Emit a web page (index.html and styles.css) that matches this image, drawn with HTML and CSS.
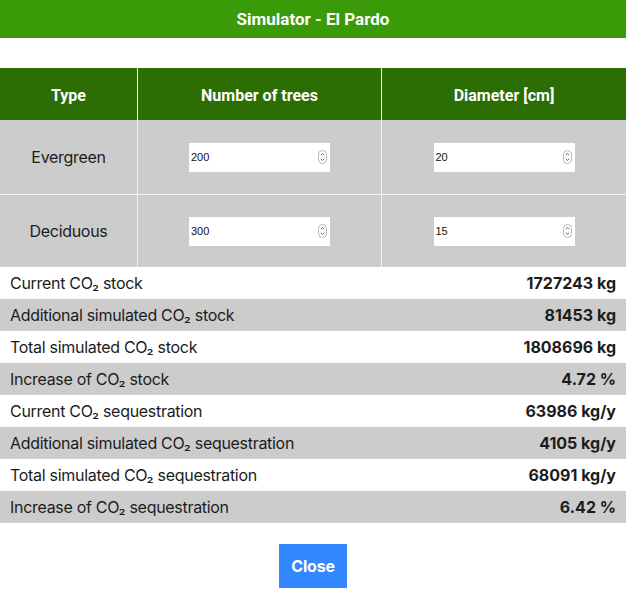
FILE: index.html
```html
<!DOCTYPE html>
<html>
<head>
<meta charset="utf-8">
<link rel="stylesheet" href="styles.css">
</head>
<body>
<div class="title">Simulator - El Pardo</div>
<div class="grid">
  <div class="th">Type</div>
  <div class="th">Number of trees</div>
  <div class="th">Diameter [cm]</div>

  <div class="td r1">Evergreen</div>
  <div class="td r1"><div class="num"><span class="val">200</span><svg class="spin" width="9" height="14" viewBox="0 0 9 14"><rect x="0.5" y="0.5" width="8" height="13" rx="4" fill="#fff" stroke="#b8b8b8"/><path d="M2.8 5.2 L4.5 3.6 L6.2 5.2 M2.8 8.8 L4.5 10.4 L6.2 8.8" fill="none" stroke="#555" stroke-width="0.9"/></svg></div></div>
  <div class="td r1"><div class="num"><span class="val">20</span><svg class="spin" width="9" height="14" viewBox="0 0 9 14"><rect x="0.5" y="0.5" width="8" height="13" rx="4" fill="#fff" stroke="#b8b8b8"/><path d="M2.8 5.2 L4.5 3.6 L6.2 5.2 M2.8 8.8 L4.5 10.4 L6.2 8.8" fill="none" stroke="#555" stroke-width="0.9"/></svg></div></div>

  <div class="td r2">Deciduous</div>
  <div class="td r2"><div class="num"><span class="val">300</span><svg class="spin" width="9" height="14" viewBox="0 0 9 14"><rect x="0.5" y="0.5" width="8" height="13" rx="4" fill="#fff" stroke="#b8b8b8"/><path d="M2.8 5.2 L4.5 3.6 L6.2 5.2 M2.8 8.8 L4.5 10.4 L6.2 8.8" fill="none" stroke="#555" stroke-width="0.9"/></svg></div></div>
  <div class="td r2"><div class="num"><span class="val">15</span><svg class="spin" width="9" height="14" viewBox="0 0 9 14"><rect x="0.5" y="0.5" width="8" height="13" rx="4" fill="#fff" stroke="#b8b8b8"/><path d="M2.8 5.2 L4.5 3.6 L6.2 5.2 M2.8 8.8 L4.5 10.4 L6.2 8.8" fill="none" stroke="#555" stroke-width="0.9"/></svg></div></div>
</div>
<div class="results">
  <div class="row"><span>Current CO₂ stock</span><b>1727243 kg</b></div>
  <div class="row alt"><span>Additional simulated CO₂ stock</span><b>81453 kg</b></div>
  <div class="row"><span>Total simulated CO₂ stock</span><b>1808696 kg</b></div>
  <div class="row alt"><span>Increase of CO₂ stock</span><b>4.72 %</b></div>
  <div class="row"><span>Current CO₂ sequestration</span><b>63986 kg/y</b></div>
  <div class="row alt"><span>Additional simulated CO₂ sequestration</span><b>4105 kg/y</b></div>
  <div class="row"><span>Total simulated CO₂ sequestration</span><b>68091 kg/y</b></div>
  <div class="row alt"><span>Increase of CO₂ sequestration</span><b>6.42 %</b></div>
</div>
<div class="actions"><button class="close">Close</button></div>
</body>
</html>
```

FILE: styles.css
```css
html, body {
  margin: 0;
  padding: 0;
  background: #fff;
}
body {
  width: 626px;
  font-family: Inter, "Liberation Sans", sans-serif;
  color: #1c1c1c;
}
.title {
  height: 38px;
  background: #3a9a07;
  color: #fff;
  font-family: Roboto, sans-serif;
  font-weight: 700;
  font-size: 17px;
  display: flex;
  align-items: center;
  justify-content: center;
  margin-bottom: 30px;
}
.grid {
  display: grid;
  grid-template-columns: 137px 243px 244px;
  grid-template-rows: 52px 74px 73px;
  column-gap: 1px;
  background: #f2f2f2;
}
.th {
  background: #2c6e04;
  color: #fff;
  font-family: Roboto, sans-serif;
  font-weight: 700;
  font-size: 16px;
  padding-top: 2px;
  box-sizing: border-box;
  display: flex;
  align-items: center;
  justify-content: center;
}
.td {
  background: #cccccc;
  display: flex;
  align-items: center;
  justify-content: center;
  font-size: 16px;
  letter-spacing: -0.3px;
}
.r2 {
  border-top: 1px solid #f2f2f2;
}
.num {
  width: 141px;
  height: 29px;
  background: #fff;
  display: flex;
  align-items: center;
  justify-content: space-between;
  padding: 0 3px 0 2px;
  box-sizing: border-box;
  font-family: "Liberation Sans", sans-serif;
  font-size: 11px;
  letter-spacing: 0;
  color: #111;
}
.spin {
  display: block;
}
.results {
  display: flex;
  flex-direction: column;
}
.row {
  height: 32px;
  display: flex;
  align-items: center;
  justify-content: space-between;
  padding: 0 10px;
  font-size: 16px;
  letter-spacing: -0.3px;
}
.row b {
  font-weight: 700;
  letter-spacing: 0;
}
.alt {
  background: #cccccc;
}
.actions {
  display: flex;
  justify-content: center;
  padding-top: 21px;
}
.close {
  width: 68px;
  height: 44px;
  border: none;
  background: #3388ff;
  color: #fff;
  font-family: Inter, "Liberation Sans", sans-serif;
  font-weight: 700;
  font-size: 16px;
  letter-spacing: -0.2px;
  padding: 0;
}
```
